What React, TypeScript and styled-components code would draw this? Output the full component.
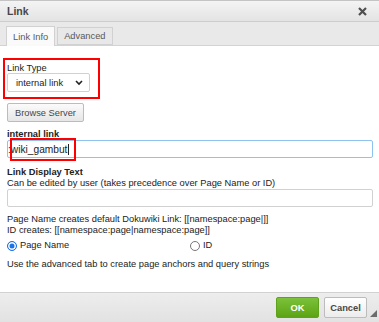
import * as React from "react";
import styled, { createGlobalStyle } from "styled-components";

const GlobalStyle = createGlobalStyle`
  html, body {
    margin: 0;
    padding: 0;
    background: #fff;
  }
  body {
    font-family: "Liberation Sans", Arial, sans-serif;
    font-size: 9.3px;
    color: #222;
  }
`;

const Dialog = styled.div`
  width: 379px;
  height: 322px;
  display: flex;
  flex-direction: column;
  background: #fff;
  overflow: hidden;
`;

const TitleBar = styled.div`
  height: 22px;
  box-sizing: border-box;
  display: flex;
  align-items: center;
  justify-content: space-between;
  padding: 0 12px 0 7px;
  border-top: 1px solid #c4c4c4;
  border-bottom: 1px solid #cdcdcd;
  background: linear-gradient(#f4f4f4, #e3e3e3);
`;

const Title = styled.span`
  font-size: 10.5px;
  font-weight: bold;
  color: #474747;
`;

const Close = styled.span`
  width: 9px;
  height: 9px;
  display: flex;
  svg {
    display: block;
  }
`;

const TabBar = styled.div`
  height: 24px;
  box-sizing: border-box;
  display: flex;
  align-items: flex-end;
  gap: 2px;
  padding: 0 0 0 6px;
  background: #e9e9e9;
  border-bottom: 1px solid #d3d3d3;
`;

interface ITab {
  active?: boolean;
}

const Tab = styled.div<ITab>`
  height: ${props => (props.active ? 20 : 18)}px;
  margin-bottom: ${props => (props.active ? -1 : 0)}px;
  box-sizing: border-box;
  padding: 0 6px;
  display: flex;
  align-items: center;
  border: 1px solid #d1d1d1;
  border-bottom: ${props => (props.active ? "none" : "1px solid #d1d1d1")};
  background: ${props => (props.active ? "#fafafa" : "#e8e8e8")};
  color: #595959;
`;

const Body = styled.div`
  flex: 1;
  padding: 12px 6px 0 7px;
  display: flex;
  flex-direction: column;
  align-items: flex-start;
`;

const Marked = styled.div`
  width: 97px;
  box-sizing: border-box;
  margin-left: -4px;
  padding: 3px 2px 5px 2px;
  border: 2px solid #ff0000;
`;

const Label = styled.div<{ bold?: boolean }>`
  line-height: 11px;
  font-weight: ${props => (props.bold ? "bold" : "normal")};
`;

const Select = styled.div`
  width: 83px;
  height: 19px;
  box-sizing: border-box;
  margin-top: -1px;
  padding: 0 6px 0 8px;
  display: flex;
  align-items: center;
  justify-content: space-between;
  border: 1px solid #d1d1d1;
  border-radius: 2px;
  background: #fff;
  color: #222;
`;

const Button = styled.div`
  height: 19px;
  box-sizing: border-box;
  margin-top: 4px;
  padding: 0 7px;
  display: flex;
  align-items: center;
  border: 1px solid #bcbcbc;
  border-radius: 2px;
  background: linear-gradient(#fbfbfb, #e6e6e6);
  color: #474747;
`;

const Field = styled.div<{ focused?: boolean }>`
  position: relative;
  width: 366px;
  height: 18px;
  box-sizing: border-box;
  padding: 0;
  display: flex;
  align-items: center;
  font-size: 10.2px;
  border: 1px solid ${props => (props.focused ? "#8fc3ee" : "#d1d1d1")};
  border-radius: 2px;
  background: #fff;
  color: #222;
`;

const Caret = styled.span`
  width: 1px;
  height: 11px;
  margin-left: 1px;
  background: #222;
`;

const MarkBox = styled.div`
  position: absolute;
  left: 2px;
  top: -3px;
  width: 66px;
  height: 23px;
  box-sizing: border-box;
  border: 2px solid #ff0000;
`;

const RadioRow = styled.div`
  width: 366px;
  display: grid;
  grid-template-columns: 183px 183px;
  margin-top: 4px;
`;

const RadioItem = styled.div`
  display: flex;
  align-items: center;
  gap: 3px;
  line-height: 11px;
`;

const Radio = styled.span<{ checked?: boolean }>`
  width: 10px;
  height: 10px;
  box-sizing: border-box;
  border-radius: 50%;
  border: 1px solid ${props => (props.checked ? "#1a73e8" : "#767676")};
  background: ${props => (props.checked ? "#1a73e8" : "#fff")};
  box-shadow: ${props => (props.checked ? "inset 0 0 0 1.5px #fff" : "none")};
`;

const Footer = styled.div`
  height: 30px;
  box-sizing: border-box;
  display: flex;
  align-items: center;
  justify-content: flex-end;
  gap: 5px;
  padding: 0 12px 0 0;
  border-top: 1px solid #d1d1d1;
  background: linear-gradient(#ededed, #e2e2e2);
  position: relative;
`;

const FooterButton = styled.div<{ primary?: boolean }>`
  width: 43px;
  height: 21px;
  box-sizing: border-box;
  display: flex;
  align-items: center;
  justify-content: center;
  font-weight: bold;
  border-radius: 2px;
  border: 1px solid ${props => (props.primary ? "#5ea11b" : "#bcbcbc")};
  background: ${props =>
    props.primary ? "linear-gradient(#7cc13a, #5ca414)" : "linear-gradient(#ffffff, #ececec)"};
  color: ${props => (props.primary ? "#fff" : "#474747")};
`;

const Grip = styled.span`
  position: absolute;
  right: 2px;
  bottom: 5px;
  width: 0;
  height: 0;
  border-left: 7px solid transparent;
  border-bottom: 7px solid #6b6b6b;
`;

export default function App() {
  return (
    <Dialog>
      <GlobalStyle />
      <TitleBar>
        <Title>Link</Title>
        <Close>
          <svg width="9" height="9" viewBox="0 0 9 9">
            <path d="M1 1 L8 8 M8 1 L1 8" stroke="#4f4f4f" strokeWidth="2.2" />
          </svg>
        </Close>
      </TitleBar>
      <TabBar>
        <Tab active>Link Info</Tab>
        <Tab>Advanced</Tab>
      </TabBar>
      <Body>
        <Marked>
          <Label>Link Type</Label>
          <Select>
            <span>internal link</span>
            <svg width="8" height="6" viewBox="0 0 8 6">
              <path d="M1 1 L4 4 L7 1" stroke="#222" strokeWidth="1.6" fill="none" />
            </svg>
          </Select>
        </Marked>
        <Button>Browse Server</Button>
        <Label bold style={{ marginTop: 7 }}>internal link</Label>
        <Field focused>
          <span>:wiki_gambut</span>
          <Caret />
          <MarkBox />
        </Field>
        <Label bold style={{ marginTop: 9 }}>Link Display Text</Label>
        <Label>Can be edited by user (takes precedence over Page Name or ID)</Label>
        <Field />
        <Label style={{ marginTop: 7 }}>Page Name creates default Dokuwiki Link: [[namespace:page|]]</Label>
        <Label>ID creates: [[namespace:page|namespace:page]]</Label>
        <RadioRow>
          <RadioItem>
            <Radio checked />
            Page Name
          </RadioItem>
          <RadioItem>
            <Radio />
            ID
          </RadioItem>
        </RadioRow>
        <Label style={{ marginTop: 8 }}>Use the advanced tab to create page anchors and query strings</Label>
      </Body>
      <Footer>
        <FooterButton primary>OK</FooterButton>
        <FooterButton>Cancel</FooterButton>
        <Grip />
      </Footer>
    </Dialog>
  );
}
